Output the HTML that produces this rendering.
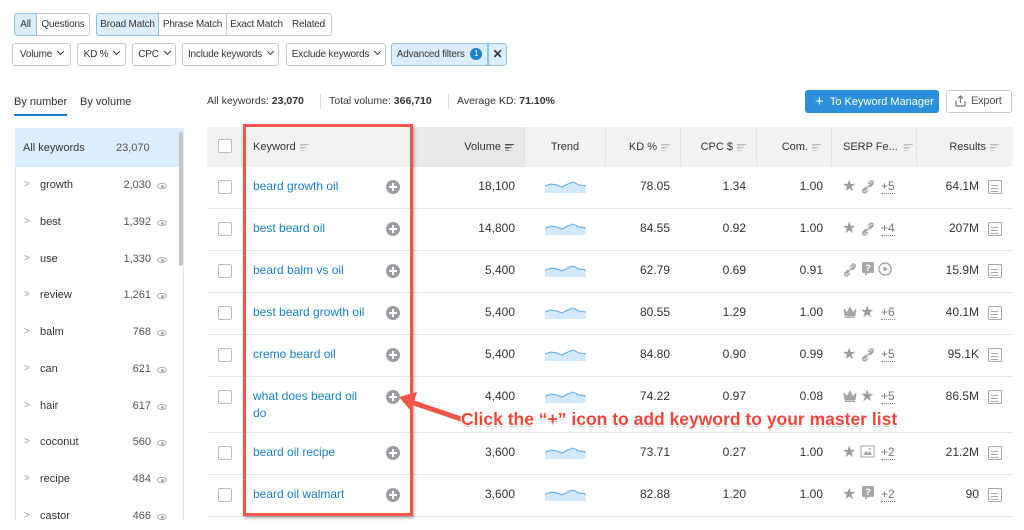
<!DOCTYPE html>
<html><head><meta charset="utf-8"><style>
*{box-sizing:border-box;margin:0;padding:0}
body{width:1024px;height:521px;overflow:hidden;background:#fff;font-family:"Liberation Sans",sans-serif;color:#333;font-size:11px;position:relative}
.a{position:absolute}
.btn{position:absolute;height:23px;border:1px solid #c6c9cc;border-radius:3px;background:#fff;font-size:10px;letter-spacing:-0.2px;line-height:21px;padding:0 5px;color:#333;white-space:nowrap;overflow:hidden;text-align:center}
.sel{background:#dceefb;border-color:#8fc2ea}
.chev{display:inline-block;width:5px;height:5px;border-right:1.6px solid #333;border-bottom:1.6px solid #333;transform:rotate(45deg);margin-left:6px;position:relative;top:-3px}
.hd{position:absolute;top:127px;height:40px;background:#f1f2f3;border-right:1px solid #e2e4e6;font-size:11px;line-height:40px;color:#333;white-space:nowrap}
.sort{display:inline-block;width:9px;height:7px;margin-left:4px;vertical-align:middle;background:linear-gradient(#bbb 0 1.5px,transparent 1.5px 3px,#bbb 3px 4.5px,transparent 4.5px 6px,#bbb 6px 7.5px) ;clip-path:polygon(0 0,100% 0,100% 22%,75% 22%,75% 60%,50% 60%,50% 100%,0 100%)}
.row{position:absolute;left:207px;width:806px;border-bottom:1px solid #e4e6e8}
.cb{position:absolute;left:11px;width:14px;height:14px;border:1px solid #b9bcbf;border-radius:2px;background:#fff}
.kw{position:absolute;left:46px;color:#1a7fd1;font-size:12px;line-height:17px}
.plus{position:absolute;left:179px;width:14px;height:14px;border-radius:50%;background:#9a9ea3}
.plus:before{content:"";position:absolute;left:3px;top:6px;width:8px;height:2px;background:#fff}
.plus:after{content:"";position:absolute;left:6px;top:3px;width:2px;height:8px;background:#fff}
.n{position:absolute;text-align:right;font-size:12px;color:#333}
.side{position:absolute;left:15px;width:169px;font-size:11px}
.sitem{position:absolute;left:15px;width:160px;height:20px;font-size:11px}
.sitem .c{position:absolute;left:9px;color:#999;font-size:10px}
.sitem .t{position:absolute;left:25px}
.sitem .v{position:absolute;right:24px;color:#555}
.sitem .e{position:absolute;right:8px;top:4px;width:10px;height:6px;border:1px solid #aaa;border-radius:50%}
.sitem .e:after{content:"";position:absolute;left:2.5px;top:0.5px;width:3px;height:3px;background:#aaa;border-radius:50%}
.res{position:absolute;left:988px;width:14px;height:14px;border:1px solid #aaa;border-radius:1px}
.res:before{content:"";position:absolute;left:2px;top:4px;width:7px;height:1px;background:#aaa;box-shadow:0 3px 0 #aaa,0 6px 0 #aaa}
.star{position:absolute;color:#9a9ea3;font-size:16px;line-height:16px}
.more{position:absolute;color:#777;font-size:12px;border-bottom:1px dotted #888;line-height:13px}
</style></head><body>
<!-- tabs -->
<div class="btn sel" style="left:14px;top:13px;width:23px;border-radius:3px 0 0 3px;padding:0">All</div>
<div class="btn" style="left:37px;top:13px;width:53px;border-left:none;border-radius:0 3px 3px 0;padding:0">Questions</div>
<div class="btn sel" style="left:96px;top:13px;width:63px;border-radius:3px 0 0 3px;padding:0">Broad Match</div>
<div class="btn" style="left:159px;top:13px;width:68px;border-left:none;border-radius:0;padding:0">Phrase Match</div>
<div class="btn" style="left:226px;top:13px;width:61px;border-radius:0;padding:0">Exact Match</div>
<div class="btn" style="left:286px;top:13px;width:46px;border-left:none;border-radius:0 3px 3px 0;padding:0">Related</div>
<!-- filters -->
<div class="btn" style="left:12px;top:43px;width:59px">Volume<span class="chev"></span></div>
<div class="btn" style="left:77px;top:43px;width:49px">KD %<span class="chev"></span></div>
<div class="btn" style="left:132px;top:43px;width:44px">CPC<span class="chev"></span></div>
<div class="btn" style="left:182px;top:43px;width:97px;padding:0 3px">Include keywords<span class="chev"></span></div>
<div class="btn" style="left:286px;top:43px;width:100px;padding:0 3px">Exclude keywords<span class="chev"></span></div>
<div class="btn sel" style="left:391px;top:43px;width:97px;border-radius:3px 0 0 3px;padding:0 3px">Advanced filters <span style="display:inline-block;width:12px;height:12px;border-radius:50%;background:#1a7fd1;color:#fff;font-size:8px;line-height:12px;text-align:center;margin-left:3px;vertical-align:1px;letter-spacing:0">1</span></div>
<div class="btn sel" style="left:488px;top:43px;width:19px;border-radius:0 3px 3px 0;font-weight:bold;font-size:12px;padding:0">✕</div>
<!-- sidebar tabs -->
<div class="a" style="left:14px;top:96px;font-size:11px">By number</div>
<div class="a" style="left:14px;top:114px;width:53px;height:2px;background:#1a7fd1"></div>
<div class="a" style="left:80px;top:96px;font-size:11px">By volume</div>
<div class="a" style="left:207px;top:95px;font-size:10.5px">All keywords: <b>23,070</b></div>
<div class="a" style="left:320px;top:94px;width:1px;height:15px;background:#ddd"></div>
<div class="a" style="left:329px;top:95px;font-size:10.5px">Total volume: <b>366,710</b></div>
<div class="a" style="left:448px;top:94px;width:1px;height:15px;background:#ddd"></div>
<div class="a" style="left:457px;top:95px;font-size:10.5px">Average KD: <b>71.10%</b></div>
<div class="a" style="left:805px;top:90px;width:134px;height:23px;background:#2b8fdc;border-radius:3px;color:#fff;font-size:11px;line-height:23px;padding-left:10px;white-space:nowrap"><span style="font-size:15px;vertical-align:-1px">+</span>&nbsp;&nbsp;To Keyword Manager</div>
<div class="btn" style="left:946px;top:90px;width:66px;color:#555;padding-left:24px;text-align:left;font-size:11px">Export</div>
<svg class="a" style="left:955px;top:95px" width="11" height="12" viewBox="0 0 11 12"><path d="M5.5 1v7M3 3.5l2.5-2.5 2.5 2.5M1 6v5h9V6" fill="none" stroke="#777" stroke-width="1.2"/></svg>
<!-- sidebar -->
<div class="side" style="top:128px;height:393px;border:1px solid #e4e6e8;border-bottom:none"></div>
<div class="side" style="top:128px;height:39px;background:#dceefb"></div>
<div class="a" style="left:23px;top:142px;font-size:11px">All keywords</div>
<div class="a" style="left:116px;top:142px;font-size:11px;color:#555">23,070</div>
<div class="a" style="left:179px;top:132px;width:4px;height:134px;background:#c4c6c8;border-radius:2px"></div>
<div class="sitem" style="top:179px"><span class="c">&gt;</span><span class="t">growth</span><span class="v">2,030</span><span class="e"></span></div>
<div class="sitem" style="top:216px"><span class="c">&gt;</span><span class="t">best</span><span class="v">1,392</span><span class="e"></span></div>
<div class="sitem" style="top:253px"><span class="c">&gt;</span><span class="t">use</span><span class="v">1,330</span><span class="e"></span></div>
<div class="sitem" style="top:289px"><span class="c">&gt;</span><span class="t">review</span><span class="v">1,261</span><span class="e"></span></div>
<div class="sitem" style="top:326px"><span class="c">&gt;</span><span class="t">balm</span><span class="v">768</span><span class="e"></span></div>
<div class="sitem" style="top:363px"><span class="c">&gt;</span><span class="t">can</span><span class="v">621</span><span class="e"></span></div>
<div class="sitem" style="top:400px"><span class="c">&gt;</span><span class="t">hair</span><span class="v">617</span><span class="e"></span></div>
<div class="sitem" style="top:436px"><span class="c">&gt;</span><span class="t">coconut</span><span class="v">560</span><span class="e"></span></div>
<div class="sitem" style="top:473px"><span class="c">&gt;</span><span class="t">recipe</span><span class="v">484</span><span class="e"></span></div>
<div class="sitem" style="top:510px"><span class="c">&gt;</span><span class="t">castor</span><span class="v">466</span><span class="e"></span></div>
<!-- header -->
<div class="hd" style="left:207px;width:35px"><div class="cb" style="top:12px"></div></div>
<div class="hd" style="left:242px;width:170px;padding-left:11px">Keyword<span class="sort"></span></div>
<div class="hd" style="left:412px;width:113px;text-align:right;padding-right:10px;background:#e8e9ea">Volume<span class="sort" style="background:linear-gradient(#555 0 1.5px,transparent 1.5px 3px,#555 3px 4.5px,transparent 4.5px 6px,#555 6px 7.5px)"></span></div>
<div class="hd" style="left:525px;width:81px;text-align:center">Trend</div>
<div class="hd" style="left:606px;width:75px;text-align:right;padding-right:10px">KD %<span class="sort"></span></div>
<div class="hd" style="left:681px;width:76px;text-align:right;padding-right:10px">CPC $<span class="sort"></span></div>
<div class="hd" style="left:757px;width:75px;text-align:right;padding-right:10px">Com.<span class="sort"></span></div>
<div class="hd" style="left:832px;width:85px;padding-left:11px">SERP Fe...<span class="sort" style="margin-left:6px"></span></div>
<div class="hd" style="left:917px;width:96px;text-align:right;padding-right:14px;border-right:none">Results<span class="sort"></span></div>

<div class="row" style="top:167px;height:42px"></div>
<div class="row" style="top:209px;height:42px"></div>
<div class="row" style="top:251px;height:42px"></div>
<div class="row" style="top:293px;height:42px"></div>
<div class="row" style="top:335px;height:42px"></div>
<div class="row" style="top:377px;height:56px"></div>
<div class="row" style="top:433px;height:42px"></div>
<div class="row" style="top:475px;height:42px"></div>

<svg width="0" height="0" style="position:absolute"><defs>
<g id="sp"><path d="M0 7 L6 5 L12 6 L17 8 L23 5 L28 3 L34 6 L41 7 L41 14 L0 14Z" fill="#d4e8fa"/><path d="M0 7 L6 5 L12 6 L17 8 L23 5 L28 3 L34 6 L41 7" fill="none" stroke="#5aa8e6" stroke-width="1"/></g>
<g id="lk"><path d="M3 11 L11 3 M5 7 L2 10 Q1 13 4 13 L7 10 M9 7 L12 4 Q13 1 10 1 L7 4" fill="none" stroke="#a3a6aa" stroke-width="1.5"/></g>
<g id="cr"><path d="M1 4 L4 8 L7 2 L10 8 L13 4 L12 11 L2 11Z M2 12.5h10" fill="#a3a6aa" stroke="#a3a6aa" stroke-width="1"/></g>
<g id="qq"><rect x="1" y="1" width="12" height="11" rx="1.5" fill="#a3a6aa"/><path d="M4 12 L4 15 L7 12Z" fill="#a3a6aa"/><text x="7" y="10" font-size="9" font-weight="bold" fill="#fff" text-anchor="middle" font-family="Liberation Sans">?</text></g>
<g id="pl"><circle cx="7" cy="7" r="6" fill="none" stroke="#a3a6aa" stroke-width="1.4"/><path d="M5.5 4.5 L10 7 L5.5 9.5Z" fill="#a3a6aa"/></g>
<g id="im"><rect x="1" y="2" width="13" height="11" fill="none" stroke="#a3a6aa"/><path d="M3 11 L6 7 L8 9 L10 7 L12 11Z" fill="#a3a6aa"/><circle cx="10" cy="5" r="1" fill="#a3a6aa"/></g>
</defs></svg>

<div class="cb a" style="left:218px;top:180px"></div><div class="kw" style="left:253px;top:178px">beard growth oil</div><div class="plus a" style="left:386px;top:180px"></div>
<div class="n" style="left:440px;width:75px;top:179px">18,100</div><svg class="a" style="left:545px;top:179px" width="42" height="15"><use href="#sp"/></svg>
<div class="n" style="left:610px;width:60px;top:179px">78.05</div><div class="n" style="left:685px;width:61px;top:179px">1.34</div><div class="n" style="left:760px;width:63px;top:179px">1.00</div>
<div class="star" style="left:842px;top:179px">★</div><svg class="a" style="left:861px;top:180px" width="15" height="15"><use href="#lk"/></svg><div class="more" style="left:881px;top:180px">+5</div>
<div class="n" style="left:920px;width:59px;top:179px">64.1M</div><div class="res" style="top:180px"></div>

<div class="cb a" style="left:218px;top:222px"></div><div class="kw" style="left:253px;top:220px">best beard oil</div><div class="plus a" style="left:386px;top:222px"></div>
<div class="n" style="left:440px;width:75px;top:221px">14,800</div><svg class="a" style="left:545px;top:221px" width="42" height="15"><use href="#sp"/></svg>
<div class="n" style="left:610px;width:60px;top:221px">84.55</div><div class="n" style="left:685px;width:61px;top:221px">0.92</div><div class="n" style="left:760px;width:63px;top:221px">1.00</div>
<div class="star" style="left:842px;top:221px">★</div><svg class="a" style="left:861px;top:222px" width="15" height="15"><use href="#lk"/></svg><div class="more" style="left:881px;top:222px">+4</div>
<div class="n" style="left:920px;width:59px;top:221px">207M</div><div class="res" style="top:222px"></div>

<div class="cb a" style="left:218px;top:264px"></div><div class="kw" style="left:253px;top:262px">beard balm vs oil</div><div class="plus a" style="left:386px;top:264px"></div>
<div class="n" style="left:440px;width:75px;top:263px">5,400</div><svg class="a" style="left:545px;top:263px" width="42" height="15"><use href="#sp"/></svg>
<div class="n" style="left:610px;width:60px;top:263px">62.79</div><div class="n" style="left:685px;width:61px;top:263px">0.69</div><div class="n" style="left:760px;width:63px;top:263px">0.91</div>
<svg class="a" style="left:843px;top:263px" width="15" height="15"><use href="#lk"/></svg><svg class="a" style="left:861px;top:261px" width="15" height="16"><use href="#qq"/></svg><svg class="a" style="left:878px;top:262px" width="15" height="15"><use href="#pl"/></svg>
<div class="n" style="left:920px;width:59px;top:263px">15.9M</div><div class="res" style="top:264px"></div>

<div class="cb a" style="left:218px;top:306px"></div><div class="kw" style="left:253px;top:304px">best beard growth oil</div><div class="plus a" style="left:386px;top:306px"></div>
<div class="n" style="left:440px;width:75px;top:305px">5,400</div><svg class="a" style="left:545px;top:305px" width="42" height="15"><use href="#sp"/></svg>
<div class="n" style="left:610px;width:60px;top:305px">80.55</div><div class="n" style="left:685px;width:61px;top:305px">1.29</div><div class="n" style="left:760px;width:63px;top:305px">1.00</div>
<svg class="a" style="left:843px;top:305px" width="15" height="15"><use href="#cr"/></svg><div class="star" style="left:860px;top:305px">★</div><div class="more" style="left:881px;top:306px">+6</div>
<div class="n" style="left:920px;width:59px;top:305px">40.1M</div><div class="res" style="top:306px"></div>

<div class="cb a" style="left:218px;top:348px"></div><div class="kw" style="left:253px;top:346px">cremo beard oil</div><div class="plus a" style="left:386px;top:348px"></div>
<div class="n" style="left:440px;width:75px;top:347px">5,400</div><svg class="a" style="left:545px;top:347px" width="42" height="15"><use href="#sp"/></svg>
<div class="n" style="left:610px;width:60px;top:347px">84.80</div><div class="n" style="left:685px;width:61px;top:347px">0.90</div><div class="n" style="left:760px;width:63px;top:347px">0.99</div>
<div class="star" style="left:842px;top:347px">★</div><svg class="a" style="left:861px;top:348px" width="15" height="15"><use href="#lk"/></svg><div class="more" style="left:881px;top:348px">+5</div>
<div class="n" style="left:920px;width:59px;top:347px">95.1K</div><div class="res" style="top:348px"></div>

<div class="cb a" style="left:218px;top:390px"></div><div class="kw" style="left:253px;top:388px">what does beard oil<br>do</div><div class="plus a" style="left:386px;top:390px"></div>
<div class="n" style="left:440px;width:75px;top:389px">4,400</div><svg class="a" style="left:545px;top:389px" width="42" height="15"><use href="#sp"/></svg>
<div class="n" style="left:610px;width:60px;top:389px">74.22</div><div class="n" style="left:685px;width:61px;top:389px">0.97</div><div class="n" style="left:760px;width:63px;top:389px">0.08</div>
<svg class="a" style="left:843px;top:389px" width="15" height="15"><use href="#cr"/></svg><div class="star" style="left:860px;top:389px">★</div><div class="more" style="left:881px;top:390px">+5</div>
<div class="n" style="left:920px;width:59px;top:389px">86.5M</div><div class="res" style="top:390px"></div>

<div class="cb a" style="left:218px;top:446px"></div><div class="kw" style="left:253px;top:444px">beard oil recipe</div><div class="plus a" style="left:386px;top:446px"></div>
<div class="n" style="left:440px;width:75px;top:445px">3,600</div><svg class="a" style="left:545px;top:445px" width="42" height="15"><use href="#sp"/></svg>
<div class="n" style="left:610px;width:60px;top:445px">73.71</div><div class="n" style="left:685px;width:61px;top:445px">0.27</div><div class="n" style="left:760px;width:63px;top:445px">1.00</div>
<div class="star" style="left:842px;top:445px">★</div><svg class="a" style="left:860px;top:444px" width="15" height="15"><use href="#im"/></svg><div class="more" style="left:881px;top:446px">+2</div>
<div class="n" style="left:920px;width:59px;top:445px">21.2M</div><div class="res" style="top:446px"></div>

<div class="cb a" style="left:218px;top:488px"></div><div class="kw" style="left:253px;top:486px">beard oil walmart</div><div class="plus a" style="left:386px;top:488px"></div>
<div class="n" style="left:440px;width:75px;top:487px">3,600</div><svg class="a" style="left:545px;top:487px" width="42" height="15"><use href="#sp"/></svg>
<div class="n" style="left:610px;width:60px;top:487px">82.88</div><div class="n" style="left:685px;width:61px;top:487px">1.20</div><div class="n" style="left:760px;width:63px;top:487px">1.00</div>
<div class="star" style="left:842px;top:487px">★</div><svg class="a" style="left:861px;top:485px" width="15" height="16"><use href="#qq"/></svg><div class="more" style="left:881px;top:488px">+2</div>
<div class="n" style="left:920px;width:59px;top:487px">90</div><div class="res" style="top:488px"></div>

<!-- red box -->
<div class="a" style="left:243px;top:124px;width:170px;height:392px;border:3px solid #f0544b;box-shadow:1px 2px 3px rgba(0,0,0,.35)"></div>
<!-- arrow -->
<svg class="a" style="left:395px;top:385px" width="70" height="45"><path d="M66 34 L16 17" stroke="#f0544b" stroke-width="5" stroke-linecap="round"/><path d="M4 12 L22 7 L16 26Z" fill="#f0544b"/></svg>
<div class="a" style="left:461px;top:409px;font-size:17.5px;font-weight:bold;color:#f3473c;white-space:nowrap;text-shadow:-1px -1px 0 #fff,1px -1px 0 #fff,-1px 1px 0 #fff,1px 1px 0 #fff,0 2px 1px rgba(0,0,0,.25)">Click the “+” icon to add keyword to your master list</div>
</body></html>
